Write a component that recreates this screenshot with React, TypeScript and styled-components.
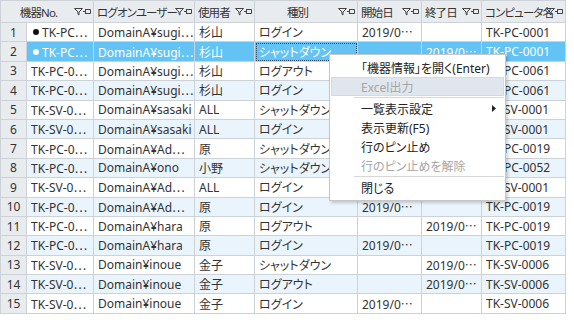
import styled, { createGlobalStyle } from "styled-components"

const GlobalStyle = createGlobalStyle`
  body {
    margin: 0;
    background: #fff;
    font-family: "Noto Sans", "Noto Sans CJK JP", sans-serif;
    font-feature-settings: "palt";
    color: #333;
  }
`

type Row = {
  no: string
  dot?: "black" | "white"
  user: string
  owner: string
  kind: string
  start: string
  end: string
  pc: string
}

const E = "2019/0⋯"

const rows: Row[] = [
  { no: "TK-PC⋯", dot: "black", user: "DomainA¥sugi⋯", owner: "杉山", kind: "ログイン", start: E, end: "", pc: "TK-PC-0001" },
  { no: "TK-PC⋯", dot: "white", user: "DomainA¥sugi⋯", owner: "杉山", kind: "シャットダウン", start: "", end: E, pc: "TK-PC-0001" },
  { no: "TK-PC-0⋯", user: "DomainA¥sugi⋯", owner: "杉山", kind: "ログアウト", start: "", end: E, pc: "TK-PC-0061" },
  { no: "TK-PC-0⋯", user: "DomainA¥sugi⋯", owner: "杉山", kind: "ログイン", start: E, end: "", pc: "TK-PC-0061" },
  { no: "TK-SV-0⋯", user: "DomainA¥sasaki", owner: "ALL", kind: "シャットダウン", start: "", end: E, pc: "TK-SV-0001" },
  { no: "TK-SV-0⋯", user: "DomainA¥sasaki", owner: "ALL", kind: "ログイン", start: E, end: "", pc: "TK-SV-0001" },
  { no: "TK-PC-0⋯", user: "DomainA¥Ad⋯", owner: "原", kind: "シャットダウン", start: "", end: E, pc: "TK-PC-0019" },
  { no: "TK-PC-0⋯", user: "DomainA¥ono", owner: "小野", kind: "シャットダウン", start: "", end: E, pc: "TK-PC-0052" },
  { no: "TK-SV-0⋯", user: "DomainA¥Ad⋯", owner: "ALL", kind: "ログイン", start: E, end: "", pc: "TK-SV-0001" },
  { no: "TK-PC-0⋯", user: "DomainA¥Ad⋯", owner: "原", kind: "ログイン", start: E, end: "", pc: "TK-PC-0019" },
  { no: "TK-PC-0⋯", user: "DomainA¥hara", owner: "原", kind: "ログアウト", start: "", end: E, pc: "TK-PC-0019" },
  { no: "TK-PC-0⋯", user: "DomainA¥hara", owner: "原", kind: "ログイン", start: E, end: "", pc: "TK-PC-0019" },
  { no: "TK-SV-0⋯", user: "Domain¥inoue", owner: "金子", kind: "シャットダウン", start: "", end: E, pc: "TK-SV-0006" },
  { no: "TK-SV-0⋯", user: "Domain¥inoue", owner: "金子", kind: "ログアウト", start: "", end: E, pc: "TK-SV-0006" },
  { no: "TK-SV-0⋯", user: "Domain¥inoue", owner: "金子", kind: "ログイン", start: E, end: "", pc: "TK-SV-0006" },
]

const SELECTED = 1

// Styled components
const Page = styled.div`
  position: relative;
  width: 574px;
  height: 320px;
  overflow: hidden;
`

const Grid = styled.div`
  display: grid;
  grid-template-columns: 26px 67px 101px 60px 103px 64px 60px 84px;
  grid-template-rows: 22px repeat(15, 19.4px);
  width: fit-content;
  border-left: 1px solid #cdd2d8;
  border-top: 1px solid #cdd2d8;
  font-size: 12px;
`

const HeaderCell = styled.div<{ $span?: number }>`
  grid-column: span ${(p) => p.$span || 1};
  display: flex;
  align-items: center;
  gap: 1px;
  padding: 0 2px 0 3px;
  background: #e9ecef;
  border-right: 1px solid #cdd2d8;
  border-bottom: 1px solid #cdd2d8;
  box-sizing: border-box;
  overflow: hidden;
  white-space: nowrap;
  color: #333;
`

const HeaderText = styled.span<{ $center?: boolean }>`
  flex: 1;
  min-width: 0;
  font-size: 11.5px;
  letter-spacing: -0.9px;
  text-align: ${(p) => (p.$center ? "center" : "left")};
`

const Icons = styled.span`
  display: flex;
  align-items: center;
  flex-shrink: 0;
`

const NumCell = styled.div`
  display: flex;
  align-items: center;
  justify-content: center;
  background: #e9ecef;
  border-right: 1px solid #cdd2d8;
  border-bottom: 1px solid #cdd2d8;
  box-sizing: border-box;
`

const Cell = styled.div<{ $alt?: boolean; $sel?: boolean; $focus?: boolean }>`
  display: flex;
  align-items: center;
  padding: 0 4px;
  box-sizing: border-box;
  white-space: nowrap;
  overflow: hidden;
  border-right: 1px solid #cdd2d8;
  border-bottom: 1px solid #cdd2d8;
  background: ${(p) => (p.$sel ? "#63c3f5" : p.$alt ? "#eaf4fc" : "#fff")};
  color: ${(p) => (p.$sel ? "#fff" : "#333")};
  outline: ${(p) => (p.$focus ? "1px dotted #2b4a66" : "none")};
  outline-offset: -2px;
`

const Dot = styled.span<{ $white?: boolean }>`
  display: inline-block;
  width: 6px;
  height: 6px;
  border-radius: 50%;
  margin: 0 3px 0 2px;
  background: ${(p) => (p.$white ? "#fff" : "#111")};
`

const Menu = styled.div`
  position: absolute;
  left: 329px;
  top: 54px;
  width: 177px;
  box-sizing: border-box;
  padding: 3px 1px 3px 1px;
  background: #fff;
  border: 1px solid #c6c6c6;
  box-shadow: 2px 2px 3px rgba(0, 0, 0, 0.18);
  font-size: 12px;
`

const MenuItem = styled.div<{ $disabled?: boolean; $hover?: boolean }>`
  display: flex;
  align-items: center;
  height: 19px;
  padding: 0 7px 0 29px;
  box-sizing: border-box;
  color: ${(p) => (p.$disabled ? "#a6a6a6" : "#222")};
  background: ${(p) => (p.$hover ? "#dfe6ee" : "transparent")};
  border: 1px solid ${(p) => (p.$hover ? "#d2dbe5" : "transparent")};
`

const MenuLabel = styled.span`
  flex: 1;
`

const Separator = styled.div`
  height: 3px;
  display: flex;
  align-items: center;
  padding-left: 23px;

  &::after {
    content: "";
    flex: 1;
    height: 1px;
    background: #d7d7d7;
  }
`

function FilterIcons() {
  return (
    <Icons>
      <svg width="9" height="9" viewBox="0 0 9 9">
        <path d="M0.5 1.5 H8.5 L5 5 V8 L4 7.3 V5 Z" fill="none" stroke="#444" strokeWidth="1" />
      </svg>
      <svg width="8" height="9" viewBox="0 0 8 9">
        <path d="M0 4.5 H2.5 M2.5 2 V7 M2.5 2.5 H7.5 V6.5 H2.5" fill="none" stroke="#444" strokeWidth="1" />
      </svg>
    </Icons>
  )
}

function SubArrow() {
  return (
    <svg width="4" height="7" viewBox="0 0 4 7">
      <path d="M0 0 L4 3.5 L0 7 Z" fill="#222" />
    </svg>
  )
}

const headers = [
  { label: "ログオンユーザー" },
  { label: "使用者" },
  { label: "種別", center: true },
  { label: "開始日" },
  { label: "終了日" },
  { label: "コンピュータ名" },
]

export default function App() {
  return (
    <Page>
      <GlobalStyle />
      <Grid>
        <HeaderCell $span={2}>
          <HeaderText $center>機器No.</HeaderText>
          <FilterIcons />
        </HeaderCell>
        {headers.map((h) => (
          <HeaderCell key={h.label}>
            <HeaderText $center={h.center}>{h.label}</HeaderText>
            <FilterIcons />
          </HeaderCell>
        ))}

        {rows.map((r, i) => {
          const alt = i % 2 === 1
          const sel = i === SELECTED
          return [
            <NumCell key={`n${i}`}>{i + 1}</NumCell>,
            <Cell key={`a${i}`} $alt={alt} $sel={sel}>
              {r.dot && <Dot $white={r.dot === "white"} />}
              {r.no}
            </Cell>,
            <Cell key={`b${i}`} $alt={alt} $sel={sel}>{r.user}</Cell>,
            <Cell key={`c${i}`} $alt={alt} $sel={sel}>{r.owner}</Cell>,
            <Cell key={`d${i}`} $alt={alt} $sel={sel} $focus={sel}>{r.kind}</Cell>,
            <Cell key={`e${i}`} $alt={alt} $sel={sel}>{r.start}</Cell>,
            <Cell key={`f${i}`} $alt={alt} $sel={sel}>{r.end}</Cell>,
            <Cell key={`g${i}`} $alt={alt} $sel={sel}>{r.pc}</Cell>,
          ]
        })}
      </Grid>

      <Menu>
        <MenuItem>「機器情報」を開く(Enter)</MenuItem>
        <MenuItem $disabled $hover>Excel出力</MenuItem>
        <Separator />
        <MenuItem>
          <MenuLabel>一覧表示設定</MenuLabel>
          <SubArrow />
        </MenuItem>
        <MenuItem>表示更新(F5)</MenuItem>
        <MenuItem>行のピン止め</MenuItem>
        <MenuItem $disabled>行のピン止めを解除</MenuItem>
        <Separator />
        <MenuItem>閉じる</MenuItem>
      </Menu>
    </Page>
  )
}
